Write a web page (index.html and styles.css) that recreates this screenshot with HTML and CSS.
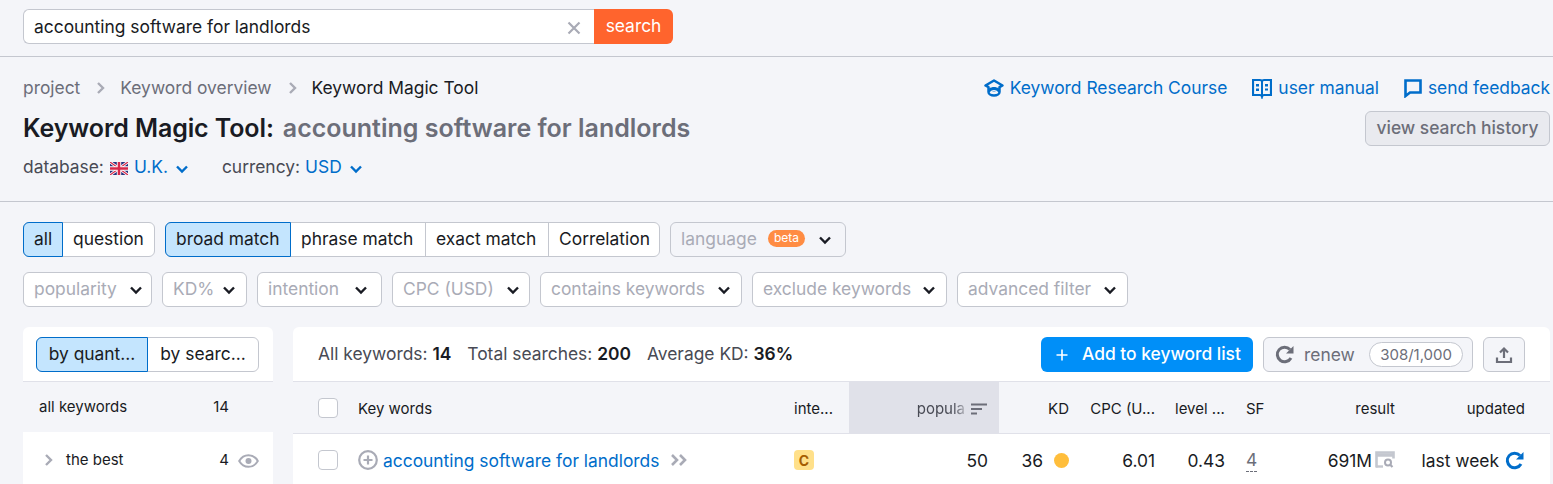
FILE: index.html
```html
<!DOCTYPE html>
<html lang="en">
<head>
<meta charset="utf-8">
<title>Keyword Magic Tool</title>
<link rel="stylesheet" href="styles.css">
</head>
<body>
<header class="searchbar">
  <div class="searchbox">
    <div class="searchinput"><span>accounting software for landlords</span>
      <svg class="clear" width="14" height="14" viewBox="0 0 14 14"><path d="M1.5 1.5l11 11M12.5 1.5l-11 11" stroke="#a9abb6" stroke-width="2.2" fill="none"/></svg>
    </div>
    <div class="searchbtn">search</div>
  </div>
</header>
<section class="head">
  <div class="crumbrow">
    <nav class="crumbs">
      <span class="muted">project</span>
      <svg class="crumbsep" width="10" height="14" viewBox="0 0 10 14"><path d="M2 2l5 5-5 5" stroke="#a9abb6" stroke-width="2.400" fill="none"/></svg>
      <span class="muted">Keyword overview</span>
      <svg class="crumbsep" width="10" height="14" viewBox="0 0 10 14"><path d="M2 2l5 5-5 5" stroke="#a9abb6" stroke-width="2.400" fill="none"/></svg>
      <span>Keyword Magic Tool</span>
    </nav>
    <div class="links">
      <a class="link"><svg width="20" height="18" viewBox="0 0 20 18"><path d="M10 1.500L1.500 6.500 4.500 8.200v4.800c0 2 2.500 3.500 5.500 3.500s5.500-1.500 5.500-3.500V8.200L18.500 6.500z" fill="none" stroke="#006dca" stroke-width="2.500" stroke-linejoin="round"/><path d="M5 9.500c1.500-1 3.200-1.500 5-1.500s3.500.5 5 1.500v3.500H5z" fill="#006dca"/><path d="M6.500 13.500c.9-1.200 2.100-1.800 3.500-1.800s2.600.6 3.500 1.800" fill="none" stroke="#f4f5f9" stroke-width="1.600"/></svg>Keyword Research Course</a>
      <a class="link"><svg width="20" height="21" viewBox="0 0 20 21"><path d="M1 2h7c1 0 1.700.4 2 1 .3-.6 1-1 2-1h7v15h-7c-1 0-1.700.4-2 1.500-.3-1.100-1-1.500-2-1.500H1z" fill="none" stroke="#006dca" stroke-width="2.200"/><path d="M10 3v16" stroke="#006dca" stroke-width="2"/><path d="M4 6h3v2.500H4zM13 6h3v2.500h-3zM4 10.500h3V13H4z" fill="#006dca"/><path d="M13 11.500h3" stroke="#006dca" stroke-width="2"/></svg>user manual</a>
      <a class="link"><svg width="18" height="19" viewBox="0 0 18 19"><path d="M1.500 1.500h15v12H6l-4.500 3.500z" fill="none" stroke="#006dca" stroke-width="2.600" stroke-linejoin="miter"/></svg>send feedback</a>
    </div>
  </div>
  <div class="titlerow">
    <h1 class="title"><span class="titlemain">Keyword Magic Tool:</span><span class="subject">accounting software for landlords</span></h1>
    <div class="historybtn">view search history</div>
  </div>
  <div class="metarow">
    <div class="meta">database:
      <svg class="flag" width="18" height="13" viewBox="0 0 18 13"><rect width="18" height="13" fill="#26357f"/><path d="M0 0l18 13M18 0L0 13" stroke="#fff" stroke-width="2.800"/><path d="M0 0l18 13M18 0L0 13" stroke="#d8284a" stroke-width="1.200"/><path d="M9 0v13M0 6.500h18" stroke="#fff" stroke-width="4.400"/><path d="M9 0v13M0 6.500h18" stroke="#d8284a" stroke-width="2.600"/></svg>
      <a class="metaval">U.K.</a>
      <svg class="metachev" width="14" height="10" viewBox="0 0 14 10"><path d="M2 2.500l5 5 5-5" stroke="#006dca" stroke-width="2.400" fill="none"/></svg>
    </div>
    <div class="meta"><span class="metalabel">currency:</span>
      <a class="metaval">USD</a>
      <svg class="metachev" width="14" height="10" viewBox="0 0 14 10"><path d="M2 2.500l5 5 5-5" stroke="#006dca" stroke-width="2.400" fill="none"/></svg>
    </div>
  </div>
</section>
<section class="filters">
  <div class="frow">
    <div class="seg"><div class="segitem on w-all">all</div><div class="segitem w-q">question</div></div>
    <div class="seg"><div class="segitem on w-broad">broad match</div><div class="segitem w-phrase">phrase match</div><div class="segitem w-exact">exact match</div><div class="segitem w-corr">Correlation</div></div>
    <div class="drop w-lang">language<span class="beta">beta</span><svg width="14" height="10" viewBox="0 0 14 10"><path d="M2 2.500l5 5 5-5" stroke="#191b23" stroke-width="2.400" fill="none"/></svg></div>
  </div>
  <div class="frow">
    <div class="drop white w-pop">popularity<svg width="14" height="10" viewBox="0 0 14 10"><path d="M2 2.500l5 5 5-5" stroke="#191b23" stroke-width="2.400" fill="none"/></svg></div>
    <div class="drop white w-kd">KD%<svg width="14" height="10" viewBox="0 0 14 10"><path d="M2 2.500l5 5 5-5" stroke="#191b23" stroke-width="2.400" fill="none"/></svg></div>
    <div class="drop white w-int">intention<svg width="14" height="10" viewBox="0 0 14 10"><path d="M2 2.500l5 5 5-5" stroke="#191b23" stroke-width="2.400" fill="none"/></svg></div>
    <div class="drop white w-cpc">CPC (USD)<svg width="14" height="10" viewBox="0 0 14 10"><path d="M2 2.500l5 5 5-5" stroke="#191b23" stroke-width="2.400" fill="none"/></svg></div>
    <div class="drop white w-con">contains keywords<svg width="14" height="10" viewBox="0 0 14 10"><path d="M2 2.500l5 5 5-5" stroke="#191b23" stroke-width="2.400" fill="none"/></svg></div>
    <div class="drop white w-exc">exclude keywords<svg width="14" height="10" viewBox="0 0 14 10"><path d="M2 2.500l5 5 5-5" stroke="#191b23" stroke-width="2.400" fill="none"/></svg></div>
    <div class="drop white w-adv">advanced filter<svg width="14" height="10" viewBox="0 0 14 10"><path d="M2 2.500l5 5 5-5" stroke="#191b23" stroke-width="2.400" fill="none"/></svg></div>
  </div>
</section>
<main class="panels">
  <aside class="side">
    <div class="sidetop">
      <div class="seg full"><div class="segitem on grow">by quant...</div><div class="segitem grow">by searc...</div></div>
    </div>
    <div class="siderow allrow"><span>all keywords</span><span>14</span></div>
    <div class="siderow grouprow">
      <svg width="10" height="14" viewBox="0 0 10 14"><path d="M2 2l5 5-5 5" stroke="#a9abb6" stroke-width="2.400" fill="none"/></svg>
      <span class="groupname">the best</span><span>4</span>
      <svg class="eye" width="21" height="14" viewBox="0 0 21 14"><path d="M1.200 7C3.500 3 6.800 1.200 10.500 1.200S17.500 3 19.800 7c-2.300 4-5.600 5.800-9.300 5.800S3.500 11 1.200 7z" fill="none" stroke="#a9abb6" stroke-width="2"/><circle cx="10.500" cy="7" r="3" fill="#a9abb6"/></svg>
    </div>
  </aside>
  <section class="card">
    <div class="cardtop">
      <div class="stats"><span>All keywords: <b>14</b></span><span>Total searches: <b>200</b></span><span>Average KD: <b>36%</b></span></div>
      <div class="actions">
        <div class="addbtn"><svg width="14" height="14" viewBox="0 0 14 14"><path d="M7 1.500v11M1.500 7h11" stroke="#fff" stroke-width="1.600"/></svg>Add to keyword list</div>
        <div class="renew"><svg width="20" height="20" viewBox="0 0 20 20"><path d="M15 5.500A7.300 7.300 0 1 0 16 14" fill="none" stroke="#6c6e79" stroke-width="3"/><path d="M18.500 2v7.500H11z" fill="#6c6e79"/></svg>renew<span class="quota">308/1,000</span></div>
        <div class="export"><svg width="18" height="18" viewBox="0 0 18 18"><path d="M9 12V3M5 6.500L9 2.500l4 4" fill="none" stroke="#6c6e79" stroke-width="2.200"/><path d="M2 11.500v4.500h14v-4.500" fill="none" stroke="#6c6e79" stroke-width="2.200"/></svg></div>
      </div>
    </div>
    <div class="tr thead">
      <div class="c c-check"><span class="box"></span></div>
      <div class="c c-kw">Key words</div>
      <div class="c c-int">inte...</div>
      <div class="c c-pop sorted"><span class="fade">popula</span><svg width="16" height="12" viewBox="0 0 16 12"><path d="M0 1.500h16M0 6h11M0 10.500h6" stroke="#6c6e79" stroke-width="2.200"/></svg></div>
      <div class="c c-kd">KD</div>
      <div class="c c-cpc">CPC (U...</div>
      <div class="c c-lvl">level ...</div>
      <div class="c c-sf">SF</div>
      <div class="c c-res">result</div>
      <div class="c c-upd">updated</div>
    </div>
    <div class="tr tbody">
      <div class="c c-check"><span class="box"></span></div>
      <div class="c c-kw">
        <svg width="20" height="20" viewBox="0 0 20 20"><circle cx="10" cy="10" r="8.800" fill="none" stroke="#a9abb6" stroke-width="2.200"/><path d="M10 5.500v9M5.500 10h9" stroke="#a9abb6" stroke-width="2.200"/></svg>
        <a class="kwlink">accounting software for landlords</a>
        <svg class="dbl" width="18" height="14" viewBox="0 0 18 14"><path d="M2 2l5 5-5 5M10 2l5 5-5 5" stroke="#a9abb6" stroke-width="2.600" fill="none"/></svg>
      </div>
      <div class="c c-int"><span class="intent">C</span></div>
      <div class="c c-pop">50</div>
      <div class="c c-kd">36<span class="dot"></span></div>
      <div class="c c-cpc">6.01</div>
      <div class="c c-lvl">0.43</div>
      <div class="c c-sf"><span class="sfnum">4</span></div>
      <div class="c c-res">691M<svg width="20" height="18" viewBox="0 0 20 18"><path d="M1.500 16.500V1.500h17v6" fill="none" stroke="#c4c7cf" stroke-width="2.600"/><path d="M1 4h18" stroke="#c4c7cf" stroke-width="3.500"/><path d="M1 15.500h7" stroke="#c4c7cf" stroke-width="2.400"/><circle cx="13" cy="11.500" r="3" fill="none" stroke="#a9abb6" stroke-width="2"/><path d="M15 13.500l2.500 2.500" stroke="#a9abb6" stroke-width="2.200"/></svg></div>
      <div class="c c-upd">last week<svg width="20" height="20" viewBox="0 0 20 20"><path d="M15 5.500A7.300 7.300 0 1 0 16 14" fill="none" stroke="#006dca" stroke-width="3"/><path d="M18.500 2v7.500H11z" fill="#006dca"/></svg></div>
    </div>
  </section>
</main>
</body>
</html>
```
FILE: styles.css
```css
* { box-sizing: border-box; }
html, body { margin: 0; height: 484px; overflow: hidden; }
body { background: #f4f5f9; font-family: Inter, "Liberation Sans", sans-serif; font-size: 17.4px; color: #191b23; }
a { text-decoration: none; }

.searchbar { height: 57px; padding: 9px 0 0 23px; border-bottom: 1px solid #c4c7cf; }
.searchbox { display: flex; width: 650px; height: 35px; }
.searchinput { flex: 1; display: flex; align-items: center; justify-content: space-between; padding: 0 13px 1px 10px; background: #fff; border: 1px solid #c4c7cf; border-right: 0; border-radius: 6px 0 0 6px; }
.clear { margin-top: 3px; }
.searchbtn { width: 79px; display: flex; align-items: center; justify-content: center; color: #fff; background: #ff642d; border-radius: 0 6px 6px 0; padding-bottom: 3px; }

.head { height: 145px; padding: 19px 3px 0 23px; border-bottom: 1px solid #c4c7cf; }
.crumbrow { display: flex; justify-content: space-between; align-items: center; height: 22px; }
.crumbs { display: flex; align-items: center; }
.crumbsep { margin: 2px 14px 0 16px; }
.muted { color: #6c6e79; }
.links { display: flex; gap: 25px; }
.link { display: flex; align-items: center; gap: 6px; color: #006dca; }
.link svg { margin-top: 2px; }
.titlerow { display: flex; justify-content: space-between; align-items: flex-start; margin-top: 6px; height: 50px; }
.title { margin: 9px 0 0; font-size: 25px; font-weight: 600; line-height: 30px; }
.titlemain { letter-spacing: -0.1px; }
.subject { margin-left: 9px; color: #6c6e79; }
.historybtn { margin-top: 7px; width: 185px; height: 35px; display: flex; align-items: center; justify-content: center; font-weight: 500; color: #6c6e79; background: #e9eaef; border: 1px solid #c4c7cf; border-radius: 6px; padding-bottom: 3px; }
.metarow { display: flex; gap: 33px; margin-top: 1px; line-height: 24px; }
.meta { display: flex; align-items: center; color: #484a54; }
.flag { margin: 2px 6px 0 6px; }
.metalabel { margin-right: 5px; }
.metaval { color: #006dca; }
.metachev { margin-left: 7px; margin-top: 3px; }

.filters { padding: 20px 0 0 23px; display: flex; flex-direction: column; gap: 15px; }
.frow { display: flex; gap: 10px; }
.seg { display: flex; height: 35px; background: #fff; border: 1px solid #c4c7cf; border-radius: 6px; }
.segitem { display: flex; align-items: center; flex: none; padding: 0 0 2px 10px; border-left: 1px solid #c4c7cf; white-space: nowrap; }
.segitem:first-child { border-left: 0; }
.segitem.on { margin: -1px; background: #c4e5fe; border: 1px solid #006dca; border-radius: 6px 0 0 6px; padding-left: 10px; }
.segitem.on + .segitem { border-left: 0; margin-left: 1px; }
.w-all { width: 40px; }
.w-q { width: 91px; }
.w-broad { width: 126px; }
.w-phrase { width: 134px; }
.w-exact { width: 123px; }
.w-corr { width: 111px; }
.drop { display: flex; align-items: center; justify-content: space-between; height: 35px; padding: 0 8px 2px 10px; color: #a9abb6; border: 1px solid #c4c7cf; border-radius: 6px; white-space: nowrap; }
.drop svg { margin-top: 3px; flex: none; }
.white { background: #fff; }
.w-lang { width: 176px; padding-right: 13px; }
.w-pop { width: 129px; }
.w-kd { width: 85px; padding-right: 10px; }
.w-int { width: 125px; padding-right: 13px; }
.w-cpc { width: 138px; padding-right: 9px; }
.w-con { width: 202px; padding-right: 10px; }
.w-exc { width: 195px; padding-right: 10px; }
.w-adv { width: 171px; padding-right: 10px; }
.beta { margin-left: auto; margin-right: 13px; padding: 0 6px 1px; height: 17px; line-height: 15px; font-size: 12px; color: #fff; background: #ff8c43; border-radius: 9px; }

.panels { display: flex; gap: 20px; margin: 20px 3px 0 23px; }
.side { width: 250px; background: #fff; border-radius: 6px 6px 0 0; flex: none; }
.sidetop { height: 55px; padding: 10px 14px 0 13px; border-bottom: 1px solid #e0e1e9; }
.full { width: 223px; }
.segitem.grow { flex: 1 1 0; justify-content: center; padding-left: 0; padding-right: 0; }
.siderow { display: flex; align-items: center; font-size: 15px; }
.allrow { height: 50px; padding: 0 44px 1px 16px; justify-content: space-between; background: #f4f5f9; }
.grouprow { height: 52px; padding: 3px 14px 0 21px; }
.groupname { flex: 1; margin-left: 12px; }
.eye { margin-left: 9px; margin-top: 2px; }

.card { flex: 1; background: #fff; border-radius: 6px 6px 0 0; }
.cardtop { height: 54px; display: flex; justify-content: space-between; padding: 10px 25px 0 25px; }
.stats { display: flex; gap: 16px; align-items: center; height: 35px; padding-bottom: 3px; color: #484a54; }
.stats b { color: #191b23; font-weight: 600; }
.actions { display: flex; gap: 10px; height: 35px; }
.addbtn { display: flex; align-items: center; gap: 13px; width: 212px; padding: 0 0 3px 14px; font-weight: 500; color: #fff; background: #008ff8; border-radius: 6px; white-space: nowrap; }
.addbtn svg { margin-top: 3px; }
.renew { display: flex; align-items: center; width: 210px; padding: 0 9px 1px 11px; color: #6c6e79; background: #f4f5f9; border: 1px solid #c4c7cf; border-radius: 6px; }
.renew svg { margin-right: 9px; }
.quota { margin-left: auto; height: 25px; line-height: 23px; padding: 0 10px; font-size: 15px; color: #6c6e79; background: #fff; border: 1px solid #c4c7cf; border-radius: 13px; }
.export { width: 42px; display: flex; align-items: center; justify-content: center; background: #f4f5f9; border: 1px solid #c4c7cf; border-radius: 6px; }

.tr { display: flex; }
.thead { height: 53px; background: #f4f5f9; border-top: 1px solid #e0e1e9; border-bottom: 1px solid #e0e1e9; font-size: 15px; }
.thead .c { padding-top: 2px; }
.thead .c-check { padding-top: 0; }
.tbody { height: 52px; }
.c { display: flex; align-items: center; flex: none; white-space: nowrap; }
.c-check { width: 55px; padding-left: 25px; }
.c-kw { width: 435px; padding-left: 10px; }
.c-int { width: 66px; padding-left: 11px; }
.c-pop { width: 150px; padding-right: 11px; justify-content: flex-end; }
.c-kd { width: 70px; justify-content: flex-end; }
.c-cpc { width: 96px; padding-right: 10px; justify-content: flex-end; }
.c-lvl { width: 70px; padding-right: 10px; justify-content: flex-end; }
.c-sf { width: 60px; padding-left: 11px; }
.c-res { width: 110px; padding-right: 10px; justify-content: flex-end; }
.c-upd { width: 130px; padding-right: 10px; justify-content: flex-end; }
.thead .c-pop { padding-right: 12px; gap: 6px; }
.thead .c-lvl { justify-content: flex-start; padding-left: 10px; }
.sorted { background: #e0e1e9; }
.fade { color: #484a54; -webkit-mask-image: linear-gradient(to right, #000 75%, transparent 110%); mask-image: linear-gradient(to right, #000 75%, transparent 110%); }
.box { width: 20px; height: 20px; background: #fff; border: 1px solid #c4c7cf; border-radius: 4px; }
.kwlink { color: #006dca; margin-left: 5px; }
.dbl { margin-left: 11px; }
.intent { width: 20px; height: 20px; display: flex; align-items: center; justify-content: center; font-size: 14px; font-weight: 700; color: #a65d00; background: #ffe08a; border-radius: 4px; }
.dot { width: 15px; height: 15px; margin-left: 11px; background: #ffbe3c; border-radius: 50%; }
.sfnum { color: #6c6e79; border-bottom: 1px dashed #6c6e79; line-height: 22px; }
.c-res svg { margin-left: 3px; }
.c-upd svg { margin-left: 6px; }
```
